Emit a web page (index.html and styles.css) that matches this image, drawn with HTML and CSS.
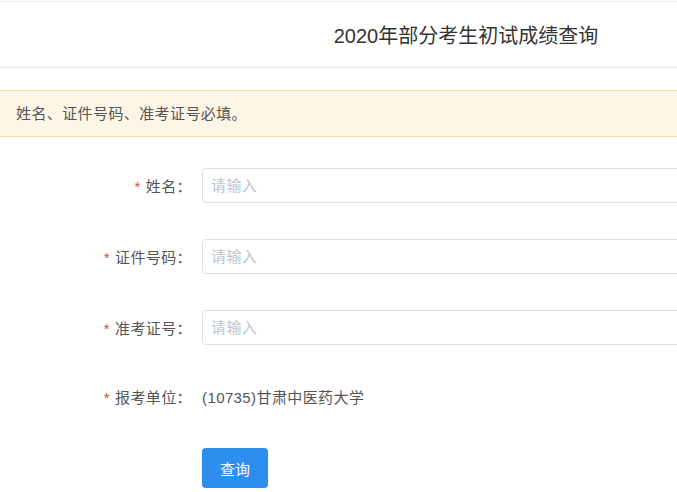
FILE: index.html
```html
<!DOCTYPE html>
<html lang="zh-CN">
<head>
    <meta charset="UTF-8">
    <meta name="viewport" content="width=device-width, initial-scale=1.0">
    <title>2020年部分考生初试成绩查询</title>
    <link rel="stylesheet" href="styles.css">
</head>
<body>

<div class="page">
    <div class="header">
        <h1>2020年部分考生初试成绩查询</h1>
    </div>

    <div class="notice">姓名、证件号码、准考证号必填。</div>

    <form class="query-form">
        <div class="row">
            <label for="name"><span class="req">*</span>姓名：</label>
            <input type="text" id="name" placeholder="请输入">
        </div>
        <div class="row">
            <label for="idcard"><span class="req">*</span>证件号码：</label>
            <input type="text" id="idcard" placeholder="请输入">
        </div>
        <div class="row">
            <label for="ticket"><span class="req">*</span>准考证号：</label>
            <input type="text" id="ticket" placeholder="请输入">
        </div>
        <div class="row">
            <label><span class="req">*</span>报考单位：</label>
            <div class="value">(10735)甘肃中医药大学</div>
        </div>
        <div class="row">
            <span></span>
            <div><button type="button">查询</button></div>
        </div>
    </form>
</div>

</body>
</html>
```

FILE: styles.css
```css
html, body {
    margin: 0;
    padding: 0;
    overflow: hidden;
    background: #fff;
}
body {
    font-family: "Liberation Sans", "Noto Sans CJK SC", sans-serif;
    font-size: 15px;
    letter-spacing: 0.4px;
    color: #555;
}
.page {
    width: 932px;
    padding-top: 1px;
}
.header {
    border-top: 1px solid #eeeeee;
    border-bottom: 1px solid #e6e6e6;
    height: 65px;
    display: flex;
    align-items: center;
    justify-content: center;
}
.header h1 {
    margin: 0;
    font-size: 20px;
    font-weight: normal;
    letter-spacing: 0;
    color: #333;
}
.notice {
    margin-top: 22px;
    height: 45px;
    line-height: 45px;
    padding-left: 16px;
    background: #fdf6e6;
    border-top: 1px solid #f5dc9f;
    border-bottom: 1px solid #f5dc9f;
    color: #555;
}
.query-form {
    padding-top: 31px;
}
.row {
    display: grid;
    grid-template-columns: 192px 1fr;
    column-gap: 10px;
    align-items: center;
    height: 35px;
    margin-bottom: 36px;
}
.row:nth-child(4) {
    margin-top: -2px;
    margin-bottom: 34px;
}
.row:last-child {
    height: 40px;
    margin-bottom: 0;
}
.row label {
    text-align: right;
    color: #555;
}
.req {
    color: #d5531f;
    margin-right: 5px;
}
.row input {
    box-sizing: border-box;
    height: 35px;
    width: 100%;
    border: 1px solid #dcdfe6;
    border-radius: 4px;
    padding: 0 8px;
    font-family: inherit;
    font-size: 15px;
    letter-spacing: inherit;
    color: #555;
    outline: none;
}
.row input::placeholder {
    color: #c0c4cc;
}
.value {
    color: #555;
}
button {
    width: 66px;
    height: 40px;
    background: #2d8ef0;
    color: #fff;
    border: none;
    border-radius: 4px;
    font-family: inherit;
    font-size: 15px;
    cursor: pointer;
}
```
